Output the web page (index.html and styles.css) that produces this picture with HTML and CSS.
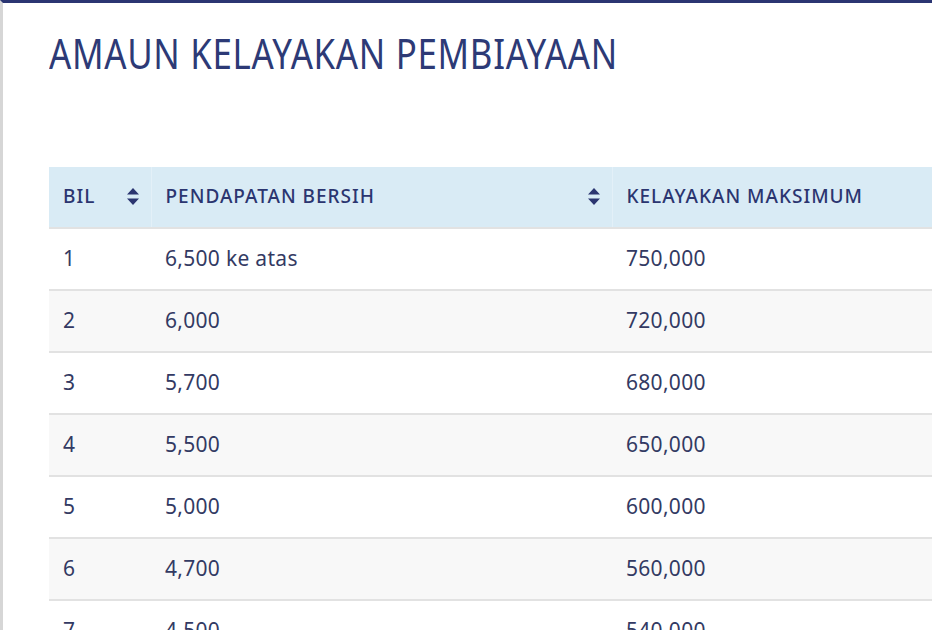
FILE: index.html
```html
<!DOCTYPE html>
<html lang="ms">
<head>
<meta charset="utf-8">
<title>Amaun Kelayakan Pembiayaan</title>
<link rel="stylesheet" href="styles.css">
</head>
<body>
<div class="page">
  <div class="content">
    <h1 class="title"><span class="title-text">AMAUN KELAYAKAN PEMBIAYAAN</span></h1>
    <table class="tbl">
      <colgroup>
        <col class="c1"><col class="c2"><col class="c3">
      </colgroup>
      <thead>
        <tr>
          <th><span class="th-in">BIL<svg class="sort" viewBox="0 0 12 17"><path d="M6 0 L12 6.5 H0 Z M0 10.5 H12 L6 17 Z"/></svg></span></th>
          <th><span class="th-in">PENDAPATAN BERSIH<svg class="sort" viewBox="0 0 12 17"><path d="M6 0 L12 6.5 H0 Z M0 10.5 H12 L6 17 Z"/></svg></span></th>
          <th><span class="th-in">KELAYAKAN MAKSIMUM</span></th>
        </tr>
      </thead>
      <tbody>
        <tr><td>1</td><td>6,500 ke atas</td><td>750,000</td></tr>
        <tr><td>2</td><td>6,000</td><td>720,000</td></tr>
        <tr><td>3</td><td>5,700</td><td>680,000</td></tr>
        <tr><td>4</td><td>5,500</td><td>650,000</td></tr>
        <tr><td>5</td><td>5,000</td><td>600,000</td></tr>
        <tr><td>6</td><td>4,700</td><td>560,000</td></tr>
        <tr><td>7</td><td>4,500</td><td>540,000</td></tr>
      </tbody>
    </table>
  </div>
</div>
</body>
</html>
```
FILE: styles.css
```css
html, body {
  margin: 0;
  padding: 0;
  background: #ffffff;
  overflow: hidden;
}
body {
  font-family: "Noto Sans", "Open Sans", sans-serif;
  color: #333a63;
}
.page {
  border-left: 3px solid #d6d6d6;
  border-top: 3px solid #2b3572;
  height: 627px;
  width: 929px;
  overflow: hidden;
}
.content {
  padding: 0 0 0 46px;
}
.title {
  margin: 0;
  padding-top: 25px;
  font-size: 41px;
  font-weight: 400;
  line-height: 50px;
  color: #2d3a76;
  letter-spacing: 0.8px;
  white-space: nowrap;
}
.title-text {
  display: inline-block;
  transform: scaleX(0.85);
  transform-origin: left center;
}
.tbl {
  margin-top: 89px;
  border-collapse: collapse;
  width: 920px;
  table-layout: fixed;
}
.c1 { width: 102px; }
.c2 { width: 461px; }
.c3 { width: 357px; }
.tbl th {
  background: #d9ebf5;
  height: 61px;
  padding: 0 12px 3px 14px;
  box-sizing: border-box;
  text-align: left;
  font-size: 19px;
  font-weight: 500;
  color: #2b3570;
  letter-spacing: 1px;
  border-left: 1px solid #e3f0f8;
}
.tbl th:first-child { border-left: none; }
.th-in {
  display: flex;
  align-items: center;
  justify-content: space-between;
}
.sort {
  width: 12px;
  height: 17px;
  fill: #2b3570;
  flex: none;
  margin-top: 2px;
}
.tbl td {
  height: 57px;
  padding: 0 14px 3px 14px;
  font-size: 21px;
  letter-spacing: 0.3px;
  color: #333a63;
  border-top: 2px solid #e2e2e2;
}
.tbl tbody tr:nth-child(even) td {
  background: #f8f8f8;
}
```
